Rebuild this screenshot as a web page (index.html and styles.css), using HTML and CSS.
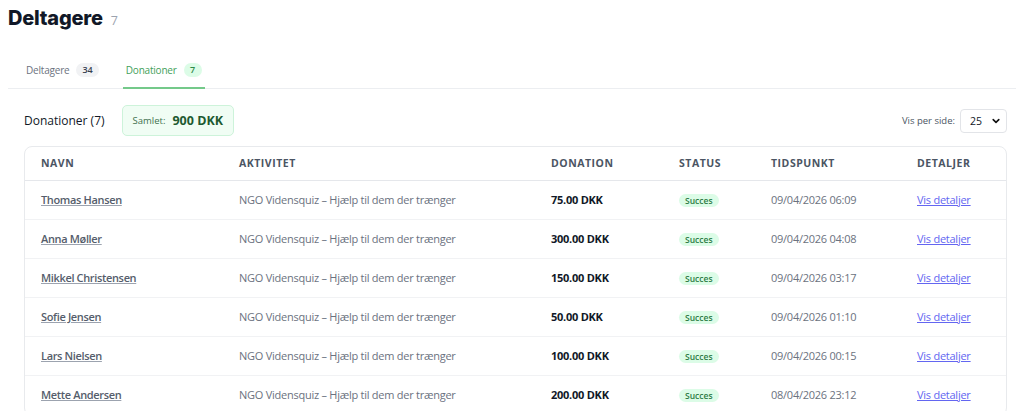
FILE: index.html
```html
<!DOCTYPE html>
<html lang="da">
<head>
    <meta charset="UTF-8">
    <meta name="viewport" content="width=device-width, initial-scale=1.0">
    <title>Deltagere</title>
    <link rel="stylesheet" href="styles.css">
</head>
<body>
    <div class="page-head">
        <h1 class="title">Deltagere</h1>
        <span class="title-count">7</span>
    </div>

    <div class="tabs">
        <div class="tab">Deltagere <span class="tab-badge">34</span></div>
        <div class="tab active">Donationer <span class="tab-badge">7</span></div>
    </div>

    <div class="content">
        <div class="toolbar">
            <div class="toolbar-left">
                <h2 class="section-title">Donationer (7)</h2>
                <div class="total">
                    <span class="total-label">Samlet:</span>
                    <span class="total-value">900 DKK</span>
                </div>
            </div>
            <div class="per-page">
                <span>Vis per side:</span>
                <div class="select">
                    <span>25</span>
                    <svg width="10" height="10" viewBox="0 0 10 10"><path d="M2.2 3.6 L5 6.4 L7.8 3.6" fill="none" stroke="#111" stroke-width="1.6" stroke-linecap="round" stroke-linejoin="round"/></svg>
                </div>
            </div>
        </div>

        <div class="card">
            <table class="donations">
                <colgroup>
                    <col style="width:214px">
                    <col style="width:312px">
                    <col style="width:128px">
                    <col style="width:92px">
                    <col style="width:146px">
                    <col>
                </colgroup>
                <thead>
                    <tr>
                        <th>Navn</th>
                        <th>Aktivitet</th>
                        <th>Donation</th>
                        <th>Status</th>
                        <th>Tidspunkt</th>
                        <th>Detaljer</th>
                    </tr>
                </thead>
                <tbody>
                    <tr>
                        <td><a class="name" href="#">Thomas Hansen</a></td>
                        <td class="muted">NGO Vidensquiz – Hjælp til dem der trænger</td>
                        <td class="amount">75.00 DKK</td>
                        <td><span class="status">Succes</span></td>
                        <td class="muted">09/04/2026 06:09</td>
                        <td><a class="details" href="#">Vis detaljer</a></td>
                    </tr>
                    <tr>
                        <td><a class="name" href="#">Anna Møller</a></td>
                        <td class="muted">NGO Vidensquiz – Hjælp til dem der trænger</td>
                        <td class="amount">300.00 DKK</td>
                        <td><span class="status">Succes</span></td>
                        <td class="muted">09/04/2026 04:08</td>
                        <td><a class="details" href="#">Vis detaljer</a></td>
                    </tr>
                    <tr>
                        <td><a class="name" href="#">Mikkel Christensen</a></td>
                        <td class="muted">NGO Vidensquiz – Hjælp til dem der trænger</td>
                        <td class="amount">150.00 DKK</td>
                        <td><span class="status">Succes</span></td>
                        <td class="muted">09/04/2026 03:17</td>
                        <td><a class="details" href="#">Vis detaljer</a></td>
                    </tr>
                    <tr>
                        <td><a class="name" href="#">Sofie Jensen</a></td>
                        <td class="muted">NGO Vidensquiz – Hjælp til dem der trænger</td>
                        <td class="amount">50.00 DKK</td>
                        <td><span class="status">Succes</span></td>
                        <td class="muted">09/04/2026 01:10</td>
                        <td><a class="details" href="#">Vis detaljer</a></td>
                    </tr>
                    <tr>
                        <td><a class="name" href="#">Lars Nielsen</a></td>
                        <td class="muted">NGO Vidensquiz – Hjælp til dem der trænger</td>
                        <td class="amount">100.00 DKK</td>
                        <td><span class="status">Succes</span></td>
                        <td class="muted">09/04/2026 00:15</td>
                        <td><a class="details" href="#">Vis detaljer</a></td>
                    </tr>
                    <tr>
                        <td><a class="name" href="#">Mette Andersen</a></td>
                        <td class="muted">NGO Vidensquiz – Hjælp til dem der trænger</td>
                        <td class="amount">200.00 DKK</td>
                        <td><span class="status">Succes</span></td>
                        <td class="muted">08/04/2026 23:12</td>
                        <td><a class="details" href="#">Vis detaljer</a></td>
                    </tr>
                </tbody>
            </table>
        </div>
    </div>
</body>
</html>
```

FILE: styles.css
```css
*{
    box-sizing: border-box;
}
body{
    margin: 8px;
    font-family: "Open Sans", "Noto Sans", Arial, sans-serif;
    color: #111827;
    background: #fff;
}
.page-head{
    display: flex;
    align-items: baseline;
    gap: 8px;
    height: 20px;
}
.title{
    margin: 0;
    font-family: Inter, "Open Sans", sans-serif;
    font-size: 20px;
    font-weight: 800;
    letter-spacing: -0.2px;
    line-height: 20px;
    color: #111827;
}
.title-count{
    font-size: 12.5px;
    color: #9ca3af;
}
.tabs{
    display: flex;
    gap: 21px;
    margin-top: 34px;
    padding-left: 15px;
    border-bottom: 1px solid #eceef1;
}
.tab{
    display: flex;
    align-items: center;
    gap: 7px;
    padding: 0 3px 9px;
    font-size: 10px;
    letter-spacing: -0.2px;
    line-height: 16px;
    font-weight: 500;
    color: #6b7280;
    border-bottom: 2px solid transparent;
    margin-bottom: -1px;
}
.tab-badge{
    display: inline-block;
    min-width: 18px;
    padding: 0 6px;
    line-height: 14px;
    border-radius: 8px;
    background: #f1f2f4;
    color: #374151;
    font-size: 9px;
    font-weight: 600;
    letter-spacing: 0;
    text-align: center;
}
.tab.active{
    color: #43a05a;
    border-bottom-color: #74c98a;
}
.tab.active .tab-badge{
    background: #dcfce7;
    color: #2f8a47;
}
.content{
    padding: 0 9px 0 16px;
}
.toolbar{
    display: flex;
    justify-content: space-between;
    align-items: center;
    margin-top: 16px;
    height: 31px;
}
.toolbar-left{
    display: flex;
    align-items: center;
    gap: 17px;
}
.section-title{
    margin: 0;
    font-size: 12px;
    font-weight: 500;
    color: #111827;
}
.total{
    display: flex;
    align-items: center;
    gap: 7px;
    height: 31px;
    padding: 0 10px 0 10px;
    background: #f0fdf4;
    border: 1px solid #cdf3da;
    border-radius: 5px;
}
.total-label{
    font-size: 9.5px;
    color: #41704f;
}
.total-value{
    font-size: 12.5px;
    font-weight: 700;
    color: #1d5a30;
}
.per-page{
    display: flex;
    align-items: center;
    gap: 5px;
    font-size: 9.5px;
    color: #4b5563;
}
.select{
    display: flex;
    align-items: center;
    justify-content: space-between;
    width: 47px;
    height: 24px;
    padding: 0 5px 0 9px;
    border: 1px solid #e2e4e8;
    border-radius: 4px;
    font-size: 10.5px;
    color: #111827;
}
.card{
    margin-top: 10px;
    border: 1px solid #e8eaed;
    border-radius: 8px;
    overflow: hidden;
}
.donations{
    width: 100%;
    border-collapse: collapse;
    table-layout: fixed;
}
.donations th{
    height: 33px;
    padding: 0;
    text-align: left;
    font-size: 10.5px;
    font-weight: 700;
    letter-spacing: 0.05em;
    text-transform: uppercase;
    color: #4b5563;
    border-bottom: 1px solid #e5e7eb;
}
.donations td{
    height: 39px;
    padding: 0;
    font-size: 11px;
    letter-spacing: -0.25px;
    border-bottom: 1px solid #f1f2f4;
    white-space: nowrap;
}
.donations th:first-child,
.donations td:first-child{
    padding-left: 16px;
}
.name{
    color: #555d6b;
    font-weight: 600;
    letter-spacing: -0.35px;
    text-decoration: underline;
    text-decoration-color: #9ca3af;
}
.muted{
    color: #6b7280;
}
.amount{
    font-weight: 700;
    color: #111827;
}
.status{
    display: inline-block;
    padding: 0 6px;
    line-height: 13px;
    border-radius: 7px;
    background: #dcfce7;
    color: #2f7d46;
    font-size: 8.5px;
    font-weight: 600;
    letter-spacing: 0;
}
.details{
    color: #6366f1;
    text-decoration: underline;
}
```
